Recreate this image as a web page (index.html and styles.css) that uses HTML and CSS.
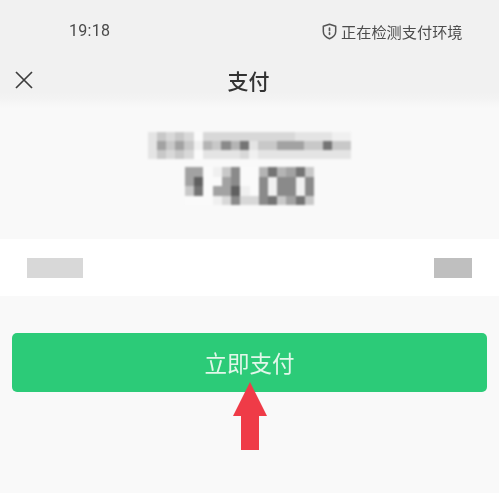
FILE: index.html
```html
<!DOCTYPE html>
<html lang="zh-CN">
<head>
<meta charset="utf-8">
<title>支付</title>
<link rel="stylesheet" href="styles.css">
</head>
<body>
<header class="top">
  <div class="status">
    <span class="time">19:18</span>
    <span class="secure">
      <svg class="shield" viewBox="0 0 16 18" width="15" height="17" aria-hidden="true"><path d="M8 1.2 14.6 3.4V9c0 3.6-2.7 6.2-6.6 7.8C4.1 15.2 1.4 12.6 1.4 9V3.4Z" fill="none" stroke="#555" stroke-width="1.6" stroke-linejoin="round"/><path d="M8 5.4v2.4M8 10.4v1.6" stroke="#555" stroke-width="1.8" stroke-linecap="round"/></svg>
      <span class="secure-text">正在检测支付环境</span>
    </span>
  </div>
  <div class="nav">
    <svg class="close" viewBox="0 0 18 18" width="18" height="18" aria-hidden="true"><path d="M1 1 17 17M17 1 1 17" stroke="#3c3c3c" stroke-width="1.7" fill="none"/></svg>
    <h1 class="title">支付</h1>
  </div>
</header>
<main class="page">
  <section class="summary">
    <div class="mosaic merchant">
      <i class="s7"></i><i class="s5"></i><i class="s6"></i><i class="s5"></i><i class="s6"></i><i class="s9"></i><i class="s6"></i><i class="s6"></i><i class="s6"></i><i class="s6"></i><i class="s6"></i><i class="s6"></i><i class="s6"></i><i class="s6"></i><i class="s6"></i><i class="s6"></i><i class="s7"></i><i class="s7"></i><i class="s7"></i><i class="s7"></i><i class="s8"></i><i class="s8"></i>
      <i class="s7"></i><i class="s3"></i><i class="s5"></i><i class="s3"></i><i class="s5"></i><i class="s8"></i><i class="s4"></i><i class="s5"></i><i class="s2"></i><i class="s4"></i><i class="s1"></i><i class="s7"></i><i class="s5"></i><i class="s5"></i><i class="s3"></i><i class="s3"></i><i class="s3"></i><i class="s5"></i><i class="s5"></i><i class="s1"></i><i class="s5"></i><i class="s5"></i>
      <i class="s7"></i><i class="s5"></i><i class="s6"></i><i class="s5"></i><i class="s6"></i><i class="s9"></i><i class="s7"></i><i class="s7"></i><i class="s7"></i><i class="s7"></i><i class="s6"></i><i class="s8"></i><i class="s7"></i><i class="s7"></i><i class="s7"></i><i class="s7"></i><i class="s7"></i><i class="s7"></i><i class="s7"></i><i class="s7"></i><i class="s7"></i><i class="s7"></i>
    </div>
    <div class="mosaic amount">
      <i class="s3"></i><i class="s3"></i><i class="s9"></i><i class="s8"></i><i class="s5"></i><i class="s2"></i><i class="s9"></i><i class="s9"></i><i class="s4"></i><i class="s1"></i><i class="s4"></i><i class="s3"></i><i class="s1"></i><i class="s5"></i>
      <i class="s3"></i><i class="s0"></i><i class="s9"></i><i class="s9"></i><i class="s3"></i><i class="s2"></i><i class="s9"></i><i class="s9"></i><i class="s2"></i><i class="s8"></i><i class="s2"></i><i class="s2"></i><i class="s8"></i><i class="s2"></i>
      <i class="s5"></i><i class="s1"></i><i class="s9"></i><i class="s3"></i><i class="s3"></i><i class="s0"></i><i class="s8"></i><i class="s9"></i><i class="s2"></i><i class="s8"></i><i class="s2"></i><i class="s2"></i><i class="s8"></i><i class="s2"></i>
      <i class="s9"></i><i class="s9"></i><i class="s9"></i><i class="s8"></i><i class="s6"></i><i class="s2"></i><i class="s6"></i><i class="s6"></i><i class="s2"></i><i class="s1"></i><i class="s5"></i><i class="s3"></i><i class="s1"></i><i class="s5"></i>
    </div>
  </section>
  <section class="row">
    <span class="blur-left"></span>
    <span class="blur-right"></span>
  </section>
  <div class="action">
    <button class="pay" type="button">立即支付</button>
    <svg class="arrow" viewBox="0 0 36 68" width="36" height="68" aria-hidden="true"><path d="M18 0 35 34H27V68H9V34H1Z" fill="#ef3b47"/></svg>
  </div>
</main>
</body>
</html>
```
FILE: styles.css
```css
* { box-sizing: border-box; }
html, body { margin: 0; height: 100%; background: #f9f9f9; }
body {
  width: 499px;
  height: 493px;
  overflow: hidden;
  background: #f9f9f9;
  font-family: "Noto Sans CJK SC", "Noto Sans", sans-serif;
  color: #3c3c3c;
  filter: blur(0.35px);
}
.top { height: 108px; background: linear-gradient(#f1f1f1 92px, #f3f3f3 98px, #f9f9f9 108px); }
.status {
  height: 62px;
  display: flex;
  align-items: center;
  justify-content: space-between;
  padding: 0 36px 0 69px;
}
.time { font: 400 16px/20px Roboto, sans-serif; color: #4a4a4a; letter-spacing: .3px; }
.secure { display: flex; align-items: center; gap: 4px; font-size: 15.2px; line-height: 20px; color: #4c4c4c; }
.secure-text { width: 122px; white-space: nowrap; }
.shield { display: block; }
.nav {
  height: 36px;
  position: relative;
  display: flex;
  align-items: center;
  justify-content: center;
}
.close { position: absolute; left: 15px; top: 9px; }
.title { margin: 0 2px 0 0; font-size: 21px; font-weight: 500; line-height: 36px; color: #333; }
.summary { height: 131px; padding-top: 24px; display: flex; flex-direction: column; align-items: center; gap: 8px; }
.mosaic { display: grid; filter: blur(1.1px); }
.merchant { width: 203px; height: 27px; grid-template-columns: repeat(22, 1fr); grid-template-rows: repeat(3, 1fr); margin-left: -1px; }
.amount { width: 129px; height: 38px; grid-template-columns: repeat(14, 1fr); grid-template-rows: repeat(4, 1fr); }
.s0 { background: #606060; }
.s1 { background: #747474; }
.s2 { background: #8a8a8a; }
.s3 { background: #a2a2a2; }
.s4 { background: #b4b4b4; }
.s5 { background: #c8c8c8; }
.s6 { background: #d8d8d8; }
.s7 { background: #e4e4e4; }
.s8 { background: #f0f0f0; }
.s9 { background: #fafafa; }
.row {
  height: 57px;
  background: #fff;
  display: flex;
  align-items: center;
  justify-content: space-between;
  padding: 0 27px;
}
.blur-left { width: 56px; height: 20px; background: #d8d8d8; }
.blur-right { width: 38px; height: 20px; background: #bfbfbf; }
.action { position: relative; padding: 37px 12px 0; }
.pay {
  display: block;
  width: 100%;
  height: 59px;
  border: 0;
  border-radius: 5px;
  background: #2ccb78;
  color: #e2f7ea;
  font: 400 22.5px/59px "Noto Sans CJK SC", sans-serif;
  padding: 0;
}
.arrow { position: absolute; left: 232px; top: 86px; display: block; }
```
